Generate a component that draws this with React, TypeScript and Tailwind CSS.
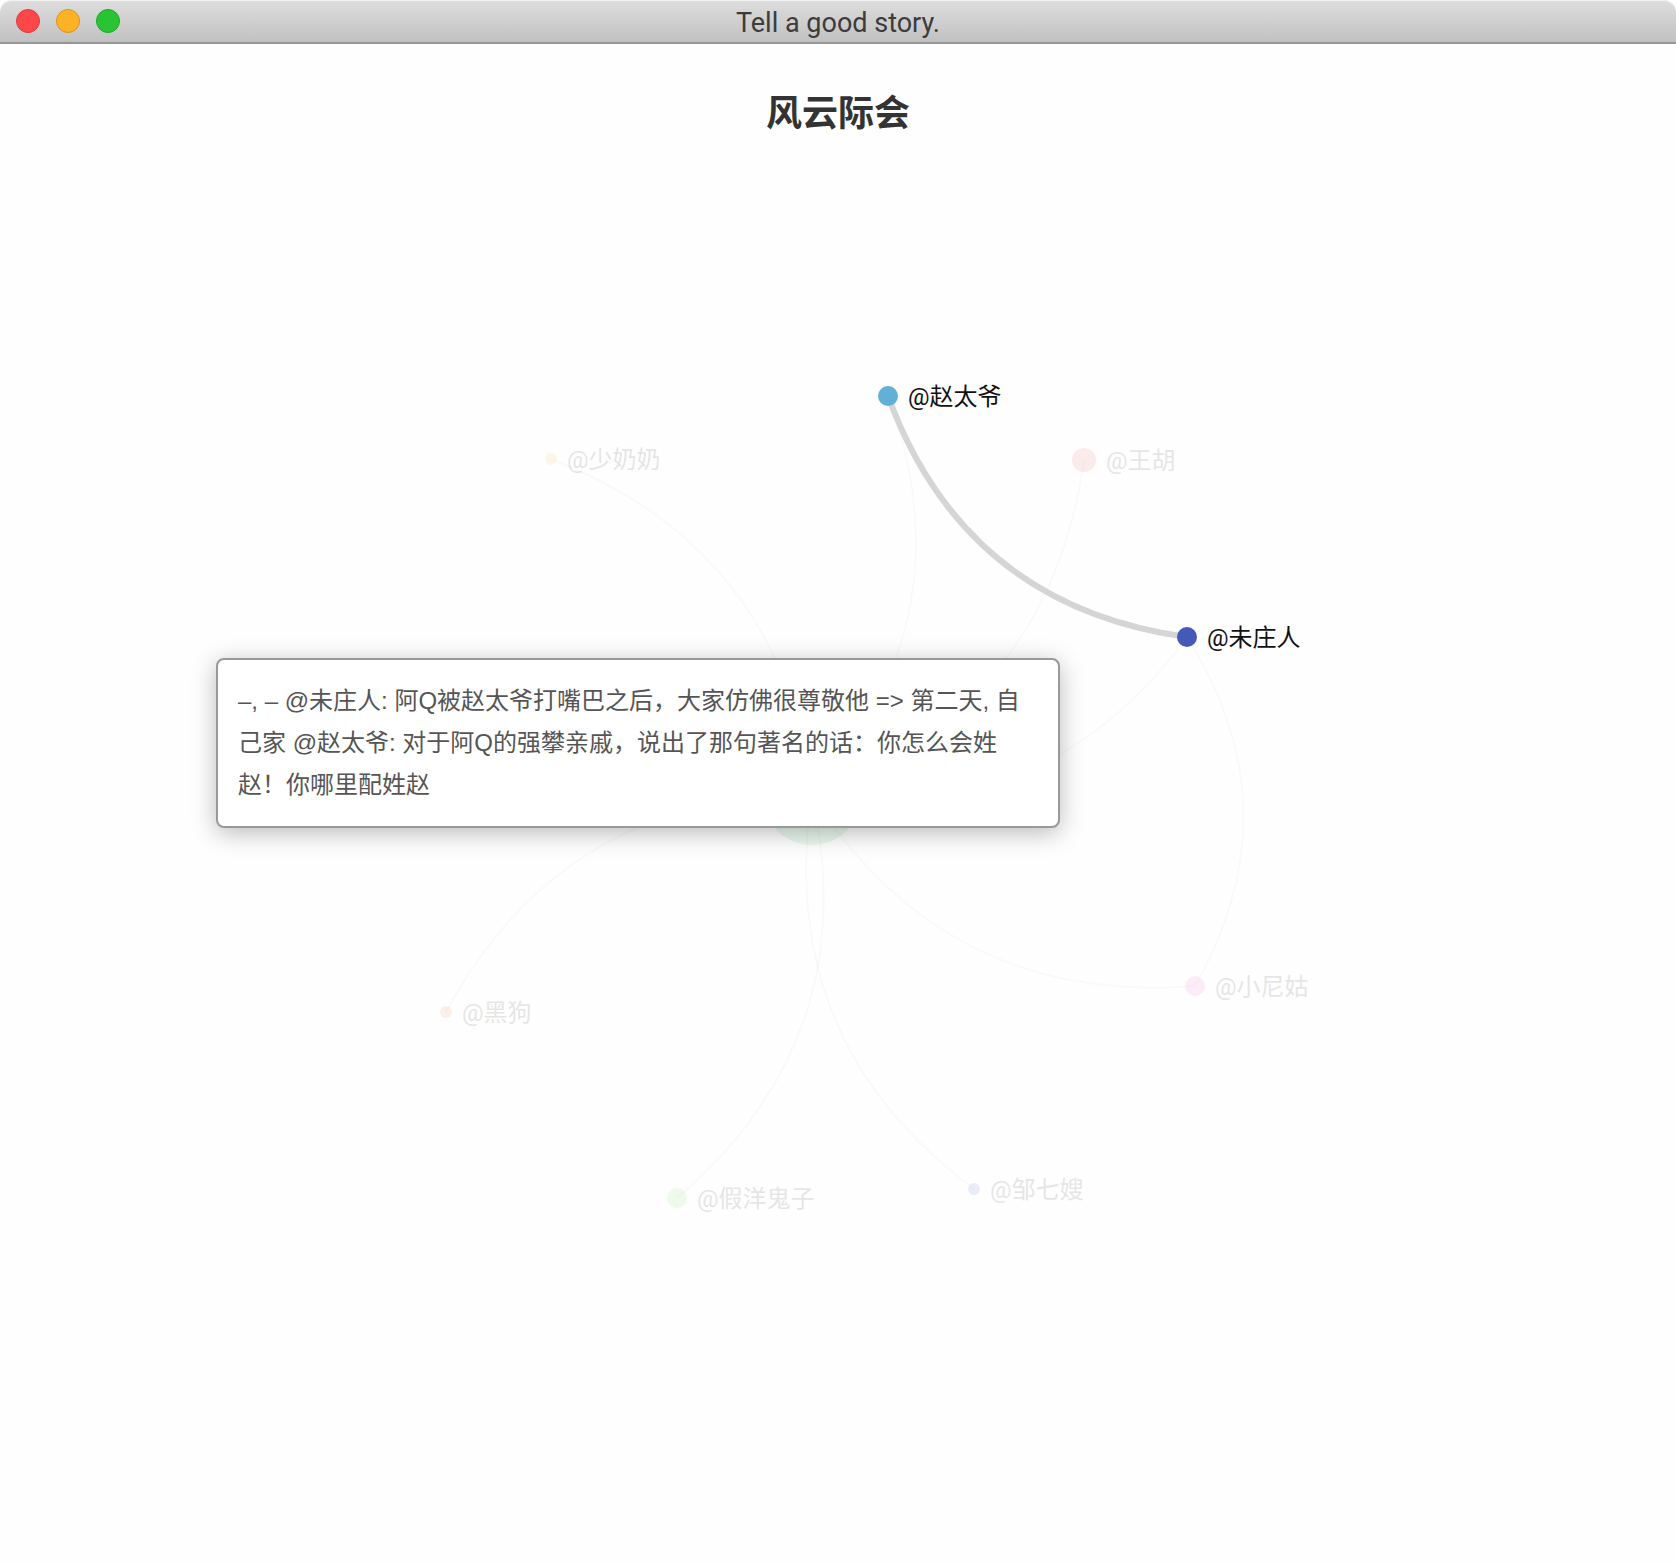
type GraphNode = {
  id: string;
  label?: string;
  x: number;
  y: number;
  r: number;
  color: string;
  active?: boolean;
};

type GraphEdge = { from: string; to: string; active?: boolean };

const nodes: GraphNode[] = [
  { id: "q", x: 812, y: 751, r: 50, color: "#30c070" },
  { id: "zhao", label: "@赵太爷", x: 888, y: 352, r: 10, color: "#61b1d6", active: true },
  { id: "wei", label: "@未庄人", x: 1187, y: 593, r: 10, color: "#4459b8", active: true },
  { id: "wang", label: "@王胡", x: 1084, y: 416, r: 12, color: "#ec4c4c" },
  { id: "shao", label: "@少奶奶", x: 551, y: 415, r: 6, color: "#ffb040" },
  { id: "gou", label: "@黑狗", x: 446, y: 968, r: 6, color: "#ff6c40" },
  { id: "jia", label: "@假洋鬼子", x: 677, y: 1154, r: 10, color: "#68dc58" },
  { id: "zou", label: "@邹七嫂", x: 974, y: 1145, r: 6, color: "#4858d0" },
  { id: "ni", label: "@小尼姑", x: 1195, y: 942, r: 10, color: "#f45cd4" },
];

const edges: GraphEdge[] = [
  { from: "zhao", to: "q" },
  { from: "wang", to: "q" },
  { from: "wei", to: "q" },
  { from: "wei", to: "ni" },
  { from: "ni", to: "q" },
  { from: "zou", to: "q" },
  { from: "q", to: "jia" },
  { from: "gou", to: "q" },
  { from: "shao", to: "q" },
  { from: "wei", to: "zhao", active: true },
];

const CURVENESS = 0.3;

function edgePath(edge: GraphEdge) {
  const a = nodes.find((n) => n.id === edge.from)!;
  const b = nodes.find((n) => n.id === edge.to)!;
  const cx = (a.x + b.x) / 2 - (a.y - b.y) * CURVENESS;
  const cy = (a.y + b.y) / 2 - (b.x - a.x) * CURVENESS;
  return `M${a.x} ${a.y}Q${cx} ${cy} ${b.x} ${b.y}`;
}

function TitleBar() {
  return (
    <header className="grid h-11 grid-cols-[1fr_auto_1fr] items-center rounded-t-xl border-b-2 border-[#979797] bg-linear-to-b from-[#dedede] to-[#c1c1c1] px-4 shadow-[inset_0_1px_0_#f2f2f2]">
      <div className="flex gap-4">
        <button type="button" aria-label="Close" className="size-6 rounded-full border border-[#e2383c] bg-[#fc4848]" />
        <button type="button" aria-label="Minimize" className="size-6 rounded-full border border-[#d9921c] bg-[#fdb225]" />
        <button type="button" aria-label="Zoom" className="size-6 rounded-full border border-[#1fa828] bg-[#2ac333]" />
      </div>
      <span className="pt-1 font-['Roboto','Noto_Sans_CJK_SC',sans-serif] text-[27px] leading-8 text-[#3c3c3c]">
        Tell a good story.
      </span>
    </header>
  );
}

function RelationGraph() {
  return (
    <svg
      viewBox="0 0 1676 1520"
      className="block h-auto w-full font-['Roboto','Noto_Sans_CJK_SC',sans-serif]"
      role="img"
      aria-label="风云际会"
    >
      {edges.map((e) => (
        <path
          key={e.from + e.to}
          d={edgePath(e)}
          fill="none"
          stroke={e.active ? "#d5d5d5" : "#000000"}
          strokeOpacity={e.active ? 1 : 0.02}
          strokeWidth={e.active ? 6 : 2}
        />
      ))}
      {nodes.map((n) => (
        <g key={n.id} opacity={n.active ? 1 : 0.1}>
          <circle cx={n.x} cy={n.y} r={n.r} fill={n.color} />
          {n.label && (
            <text x={n.x + n.r + 10} y={n.y + 9} fontSize={24} fill="#111111">
              {n.label}
            </text>
          )}
        </g>
      ))}
    </svg>
  );
}

export default function App() {
  return (
    <div className="min-h-screen bg-white font-['Noto_Sans_CJK_SC',sans-serif]">
      <TitleBar />
      <main className="relative bg-[#fefefe]">
        <h1 className="absolute inset-x-0 top-[38px] text-center text-4xl leading-14 font-bold text-[#333333]">
          风云际会
        </h1>
        <RelationGraph />
        <div
          role="tooltip"
          className="absolute top-[614px] left-[216px] w-[844px] rounded-lg border-2 border-[#999999] bg-white p-5 font-['Liberation_Sans','Noto_Sans_CJK_SC',sans-serif] text-2xl leading-[42px] text-[#555555] shadow-[0_5px_24px_rgba(0,0,0,0.27)]"
        >
          –, – @未庄人: 阿Q被赵太爷打嘴巴之后，大家仿佛很尊敬他 =&gt; 第二天, 自
          <br />
          己家 @赵太爷: 对于阿Q的强攀亲戚，说出了那句著名的话：你怎么会姓
          <br />
          赵！你哪里配姓赵
        </div>
      </main>
    </div>
  );
}
